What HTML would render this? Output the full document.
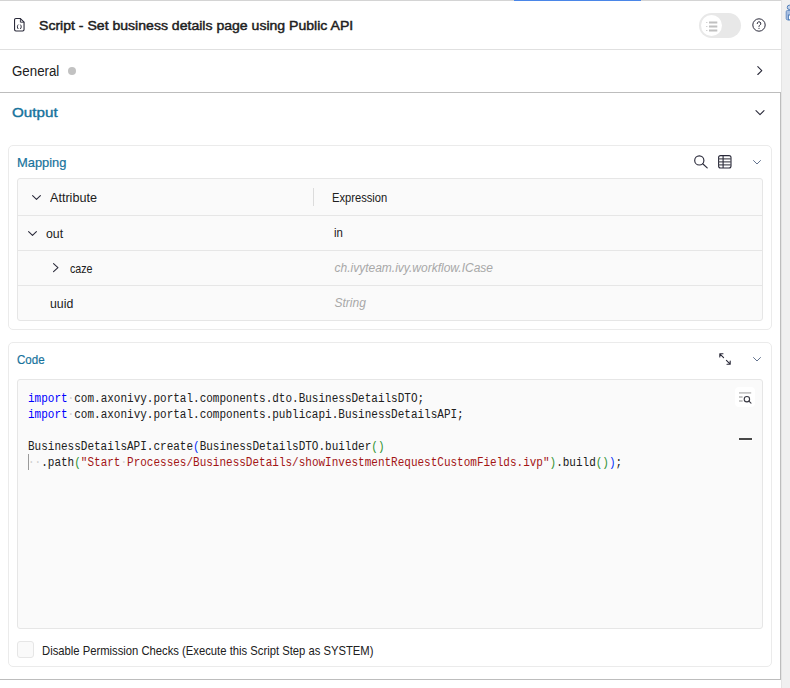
<!DOCTYPE html>
<html lang="en">
<head>
<meta charset="utf-8">
<title>Script - Set business details page using Public API</title>
<style>
html,body{margin:0;padding:0;}
body{width:790px;height:688px;overflow:hidden;background:#f0f0f0;font-family:"Liberation Sans",sans-serif;color:#202020;position:relative;}
.abs{position:absolute;}
#panel{left:0;top:0;width:781px;border-right:1px solid #e4e4e4;height:688px;background:#fff;}
.t{position:absolute;white-space:nowrap;line-height:1;transform-origin:0 0;}
#topline{left:0;top:0;width:781px;height:1px;background:#d4d4d4;}
#topblue{left:514px;top:0;width:127px;height:1px;background:#4a86e8;}
#div1{left:0;top:49px;width:781px;height:1px;background:#e0e0e0;}
#outsec{left:-1px;top:92px;width:780px;height:586px;border:1px solid #bdbdbd;box-sizing:content-box;}
#title{left:39.300px;top:19.350px;font-size:13.4px;font-weight:normal;-webkit-text-stroke:0.45px #202020;color:#202020;}
#general{left:12px;top:64.100px;font-size:14px;color:#202020;}
#dot{left:68px;top:67px;width:8px;height:8px;border-radius:50%;background:#c2c2c2;}
#output{left:12px;top:106.100px;font-size:13.6px;font-weight:normal;-webkit-text-stroke:0.4px #17739c;color:#17739c;}
.card{border:1px solid #ebebeb;border-radius:5px;background:#fff;box-sizing:border-box;}
#card1{left:8px;top:145px;width:764px;height:185px;}
#card2{left:8px;top:342px;width:764px;height:325px;}
.ctitle{font-size:12.7px;color:#17739c;-webkit-text-stroke:0.2px #17739c;}
#tbl{left:17px;top:178px;width:746px;height:143px;border:1px solid #e6e6e6;border-radius:3px;background:#fafafa;box-sizing:border-box;}
.rowline{left:18px;width:744px;height:1px;background:#e6e6e6;}
#colsep{left:313px;top:188px;width:1px;height:18px;background:#dcdcdc;}
.cell{font-size:12.7px;color:#202020;}
.ph{font-size:12px;color:#a8a8a8;font-style:italic;}
#codebox{left:17px;top:379px;width:746px;height:250px;border:1px solid #e6e6e6;border-radius:3px;background:#fafafa;box-sizing:border-box;}
.code{font-family:"Liberation Mono",monospace;font-size:12px;transform:scaleX(0.9167);line-height:16px;left:28px;white-space:pre;color:#202020;}
.kw{color:#0000ff;}
.str{color:#a31515;}
.b1{color:#0431fa;}
.b2{color:#319331;}
.ws{color:#cfcfcf;}
#cb{left:17px;top:641px;width:17px;height:17px;border:1px solid #e6e6e6;border-radius:3px;background:#fafafa;box-sizing:border-box;}
#cblabel{left:42.300px;top:645.300px;font-size:12.7px;color:#202020;}
#toggle{left:699px;top:13px;width:42px;height:25px;border-radius:13px;background:#e8e8e8;}
#knob{left:701px;top:15px;width:21px;height:21px;border-radius:50%;background:#fff;}
svg{position:absolute;overflow:visible;}
</style>
</head>
<body>
<div id="panel" class="abs"></div>
<div id="topline" class="abs"></div>
<div id="topblue" class="abs"></div>
<div id="div1" class="abs"></div>
<div id="outsec" class="abs"></div>

<!-- header -->
<svg style="left:13.700px;top:18.200px" width="11" height="14" viewBox="0 0 11 14" fill="none" stroke="#2a2a3a" stroke-width="1.1" stroke-linejoin="round" stroke-linecap="round">
  <path d="M1.900 .55h4.500l3.650 3.650v7.400a1.350 1.350 0 0 1-1.350 1.350H1.900A1.350 1.350 0 0 1 .55 11.600V1.900A1.350 1.350 0 0 1 1.900 .55z"/>
  <path d="M6.400 .8v3.400h3.400" stroke-width=".9"/>
  <path d="M4 6.900c-.9 1-.9 2.800 0 3.800M6.600 6.900c.9 1 .9 2.800 0 3.800" stroke-width="1"/>
</svg>
<div id="title" class="t" style="transform:scaleX(1.05)">Script - Set business details page using Public API</div>
<div id="toggle" class="abs"></div>
<div id="knob" class="abs"></div>
<svg style="left:706px;top:20.500px" width="12" height="11" viewBox="0 0 12 11" stroke="#c0c0c0" stroke-width="1.800" fill="none">
  <path d="M3 1.500h8.300M3 5.500h8.300M3 9.500h8.300"/>
  <path d="M0.300 1.500h1M0.300 5.500h1M0.300 9.500h1" stroke-width="1.200"/>
</svg>
<svg style="left:752px;top:18px" width="14" height="14" viewBox="0 0 14 14" fill="none" stroke="#2a2a3a" stroke-width="1">
  <circle cx="7" cy="7" r="6.2"/>
  <path d="M5.2 5.6a1.8 1.8 0 1 1 2.6 1.6c-.5.3-.8.6-.8 1.3" stroke-linecap="round"/>
  <circle cx="7" cy="10.3" r=".6" fill="#2a2a3a" stroke="none"/>
</svg>

<!-- general -->
<div id="general" class="t" style="transform:scaleX(0.95)">General</div>
<div id="dot" class="abs"></div>
<svg style="left:757px;top:66.300px" width="6" height="10" viewBox="0 0 6 10" fill="none" stroke="#2a2a3a" stroke-width="1.1" stroke-linecap="round" stroke-linejoin="round">
  <path d="M.8.700L4.800 4.600 .8 8.500"/>
</svg>

<!-- output -->
<div id="output" class="t" style="transform:scaleX(1.118)">Output</div>
<svg style="left:755px;top:110px" width="10" height="6" viewBox="0 0 10 6" fill="none" stroke="#2a2a3a" stroke-width="1.1" stroke-linecap="round" stroke-linejoin="round">
  <path d="M1 .7L5 4.600 9 .7"/>
</svg>

<!-- mapping card -->
<div id="card1" class="abs card"></div>
<div class="t ctitle" style="left:16.500px;top:157px;transform:scaleX(1.015)">Mapping</div>
<svg style="left:694px;top:155px" width="14" height="14" viewBox="0 0 14 14" fill="none" stroke="#2a2a3a" stroke-width="1.150" stroke-linecap="round">
  <circle cx="5.3" cy="5.4" r="4.6"/>
  <path d="M8.700 8.800L13.200 12.900"/>
</svg>
<svg style="left:718.400px;top:155px" width="14" height="14" viewBox="0 0 14 14" fill="none" stroke="#2a2a3a" stroke-width="1.1">
  <rect x=".6" y=".6" width="12.400" height="12.400" rx="2"/>
  <path d="M.6 3.900h12.400M.6 6.900h12.400M.6 9.900h12.400" stroke="#55555f"/>
  <path d="M5.100 .6v12.400"/>
</svg>
<svg style="left:753px;top:160px" width="8" height="5" viewBox="0 0 8 5" fill="none" stroke="#63738f" stroke-width="1" stroke-linecap="round" stroke-linejoin="round">
  <path d="M.5.5L4 4 7.500.5"/>
</svg>

<div id="tbl" class="abs"></div>
<div class="abs rowline" style="top:215px"></div>
<div class="abs rowline" style="top:250px"></div>
<div class="abs rowline" style="top:285px"></div>
<div id="colsep" class="abs"></div>

<svg style="left:31.700px;top:194.500px" width="9" height="5" viewBox="0 0 9 5" fill="none" stroke="#2a2a3a" stroke-width="1.1" stroke-linecap="round" stroke-linejoin="round"><path d="M.6.6L4.500 4.400 8.400.6"/></svg>
<div class="t cell" style="left:50px;top:192px;transform:scaleX(0.994)">Attribute</div>
<div class="t cell" style="left:332px;top:192px;transform:scaleX(0.880)">Expression</div>

<svg style="left:27.600px;top:230.600px" width="9" height="5" viewBox="0 0 9 5" fill="none" stroke="#2a2a3a" stroke-width="1.1" stroke-linecap="round" stroke-linejoin="round"><path d="M.6.6L4.500 4.400 8.400.6"/></svg>
<div class="t cell" style="left:46px;top:228px;transform:scaleX(0.972)">out</div>
<div class="t cell" style="left:334px;top:227px;font-size:12px;transform:scaleX(0.950)">in</div>

<svg style="left:53px;top:263.300px" width="6" height="10" viewBox="0 0 6 10" fill="none" stroke="#2a2a3a" stroke-width="1.1" stroke-linecap="round" stroke-linejoin="round"><path d="M.55.55L4.950 4.550 .55 8.550"/></svg>
<div class="t cell" style="left:70px;top:263px;transform:scaleX(0.841)">caze</div>
<div class="t ph" style="left:334.500px;top:261.500px;">ch.ivyteam.ivy.workflow.ICase</div>

<div class="t cell" style="left:50px;top:297.500px;transform:scaleX(0.971)">uuid</div>
<div class="t ph" style="left:334.500px;top:296.500px;">String</div>

<!-- code card -->
<div id="card2" class="abs card"></div>
<div class="t ctitle" style="left:16.500px;top:354px;transform:scaleX(0.910)">Code</div>
<svg style="left:719px;top:353px" width="12" height="12" viewBox="0 0 12 12" fill="none" stroke="#2a2a3a" stroke-width="1.1" stroke-linecap="round" stroke-linejoin="round">
  <path d="M.8 4V.8H4M.8.8L4.6 4.600M11.2 8v3.200H8M11.200 11.200L7.400 7.400"/>
</svg>
<svg style="left:753px;top:356.800px" width="8" height="5" viewBox="0 0 8 5" fill="none" stroke="#63738f" stroke-width="1" stroke-linecap="round" stroke-linejoin="round">
  <path d="M.5.5L4 4 7.500.5"/>
</svg>
<div id="codebox" class="abs"></div>
<div class="t code" style="top:391px;line-height:16px;"><span class="kw">import</span><span class="ws">·</span>com.axonivy.portal.components.dto.BusinessDetailsDTO;
<span class="kw">import</span><span class="ws">·</span>com.axonivy.portal.components.publicapi.BusinessDetailsAPI;

BusinessDetailsAPI.create<span class="b1">(</span>BusinessDetailsDTO.builder<span class="b2">()</span>
<span class="ws">··</span>.path<span class="b2">(</span><span class="str">"Start<span class="ws">·</span>Processes/BusinessDetails/showInvestmentRequestCustomFields.ivp"</span><span class="b2">)</span>.build<span class="b2">()</span><span class="b1">)</span>;</div>
<div class="abs" style="left:28px;top:454px;width:1px;height:16px;background:#9a9a9a;"></div>
<div class="abs" style="left:735px;top:387px;width:20px;height:19.500px;border-radius:4px;background:#fff;"></div>
<svg style="left:738px;top:391px" width="14" height="13" viewBox="0 0 14 13" fill="none" stroke="#c6c6c6" stroke-width="1.800">
  <path d="M1 1.900h12.200M1 6h3.600M1 10h3.600"/>
  <circle cx="8.900" cy="8.200" r="2.700" stroke="#3a3a44" stroke-width="1.100"/>
  <path d="M10.900 10.200L13 12.200" stroke="#3a3a44" stroke-width="1.100" stroke-linecap="round"/>
</svg>
<div class="abs" style="left:738.500px;top:437.500px;width:14px;height:3px;background:#fdfdfd;"></div><div class="abs" style="left:739px;top:438px;width:13px;height:2px;background:#484848;"></div>

<div id="cb" class="abs"></div>
<div id="cblabel" class="t" style="transform:scaleX(0.887)">Disable Permission Checks (Execute this Script Step as SYSTEM)</div>

<!-- right strip icon -->
<svg style="left:785px;top:4px" width="5" height="17" viewBox="0 0 5 17">
  <rect x="2.300" y="1.200" width="6" height="4.300" rx="2" fill="#c4d3ea" stroke="#4f7db8" stroke-width="1"/>
  <rect x="1.200" y="6.500" width="7" height="9.300" rx="1.200" fill="#a9bfe1" stroke="#6a92c6" stroke-width="1"/>
  <rect x="3.400" y="11" width="4" height="4.800" fill="#ffffff" stroke="#4f7db8" stroke-width="1"/>
</svg>
</body>
</html>
